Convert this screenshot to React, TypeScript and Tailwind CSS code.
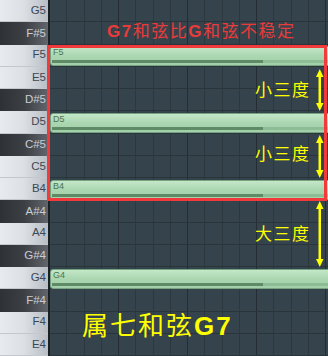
import React from "react";

type Row = { name: string; black: boolean; note?: boolean };

const rows: Row[] = [
  { name: "G5", black: false },
  { name: "F#5", black: true },
  { name: "F5", black: false, note: true },
  { name: "E5", black: false },
  { name: "D#5", black: true },
  { name: "D5", black: false, note: true },
  { name: "C#5", black: true },
  { name: "C5", black: false },
  { name: "B4", black: false, note: true },
  { name: "A#4", black: true },
  { name: "A4", black: false },
  { name: "G#4", black: true },
  { name: "G4", black: false, note: true },
  { name: "F#4", black: true },
  { name: "F4", black: false },
  { name: "E4", black: false },
];

const cells = Array.from({ length: 17 }, (_, i) => i);

function Note({ label }: { label: string }) {
  return (
    <div className="absolute left-0 right-[3px] top-[1.5px] h-[20px] rounded-[3px] border border-[#76a37f] bg-linear-to-b from-[#c4e7c8] via-[#aad6b0] to-[#a2cfa9]">
      <div className="pl-[2px] pt-[1px] text-[9px] leading-none text-[#4a7552] font-['Liberation_Sans',sans-serif]">
        {label}
      </div>
      <div className="absolute left-[1px] right-[2px] top-[13px] h-[3px] bg-[#8dbd95]">
        <div className="h-full w-[211px] bg-[#5e8a66]" />
      </div>
    </div>
  );
}

function Arrow({ top, bottom }: { top: number; bottom: number }) {
  const cx = 319.75;
  return (
    <g fill="#ffff00">
      <rect x={cx - 1.25} y={top + 6} width={2.5} height={bottom - top - 12} />
      <polygon points={`${cx},${top} ${cx - 3.75},${top + 8} ${cx + 3.75},${top + 8}`} />
      <polygon points={`${cx},${bottom} ${cx - 3.75},${bottom - 8} ${cx + 3.75},${bottom - 8}`} />
    </g>
  );
}

export default function App() {
  return (
    <div className="relative w-[328px] h-[356px] overflow-hidden bg-[#35434c] font-['Liberation_Sans','Noto_Sans_CJK_SC',sans-serif]">
      <div className="flex flex-col">
        {rows.map((r) => (
          <div key={r.name} className="flex h-[22.25px] shrink-0">
            <div
              className={
                r.black
                  ? "w-[48px] shrink-0 flex items-center justify-end pr-[2px] bg-linear-to-r from-[#2e3135] via-[#3c3f44] to-[#62666c] text-[#c9ced5]"
                  : "w-[48px] shrink-0 flex items-center justify-end pr-[2px] bg-linear-to-r from-[#e7eaee] via-[#dce0e5] to-[#b8bdc5] text-[#3c4755] border-b border-[#c4c8ce]"
              }
            >
              <span className="text-[11.5px] leading-none">{r.name}</span>
            </div>
            <div className="w-[2px] shrink-0 bg-[#1b2025]" />
            <div className="relative flex-1 flex border-b border-[#2a343b]">
              {cells.map((i) => (
                <div
                  key={i}
                  className={
                    i % 4 === 3
                      ? "w-[17.25px] shrink-0 border-r border-[#242d33]"
                      : "w-[17.25px] shrink-0 border-r border-[#2c373e]"
                  }
                />
              ))}
              {r.note && <Note label={r.name} />}
            </div>
          </div>
        ))}
      </div>

      <div className="absolute left-[47px] top-[45px] w-[280px] h-[156px] border-[3px] border-[#f23a3a]" />

      <div className="absolute left-[107px] top-[23px] text-[17px] leading-none tracking-[1.5px] text-[#e93b3b] whitespace-nowrap">
        <span className="font-bold">G7</span>和弦比<span className="font-bold">G</span>和弦不稳定
      </div>

      <div className="absolute left-[255px] top-[82px] text-[17px] leading-none tracking-[1.5px] text-[#ffff00] whitespace-nowrap">
        小三度
      </div>
      <div className="absolute left-[255px] top-[146px] text-[17px] leading-none tracking-[1.5px] text-[#ffff00] whitespace-nowrap">
        小三度
      </div>
      <div className="absolute left-[255px] top-[226px] text-[17px] leading-none tracking-[1.5px] text-[#ffff00] whitespace-nowrap">
        大三度
      </div>

      <div className="absolute left-[82px] top-[313px] text-[26px] leading-none tracking-[2px] text-[#ffff00] whitespace-nowrap">
        属七和弦<span className="font-bold">G7</span>
      </div>

      <svg className="absolute inset-0 pointer-events-none" width="328" height="356" viewBox="0 0 328 356">
        <Arrow top={69} bottom={111} />
        <Arrow top={135} bottom={178} />
        <Arrow top={201} bottom={267} />
      </svg>
    </div>
  );
}
